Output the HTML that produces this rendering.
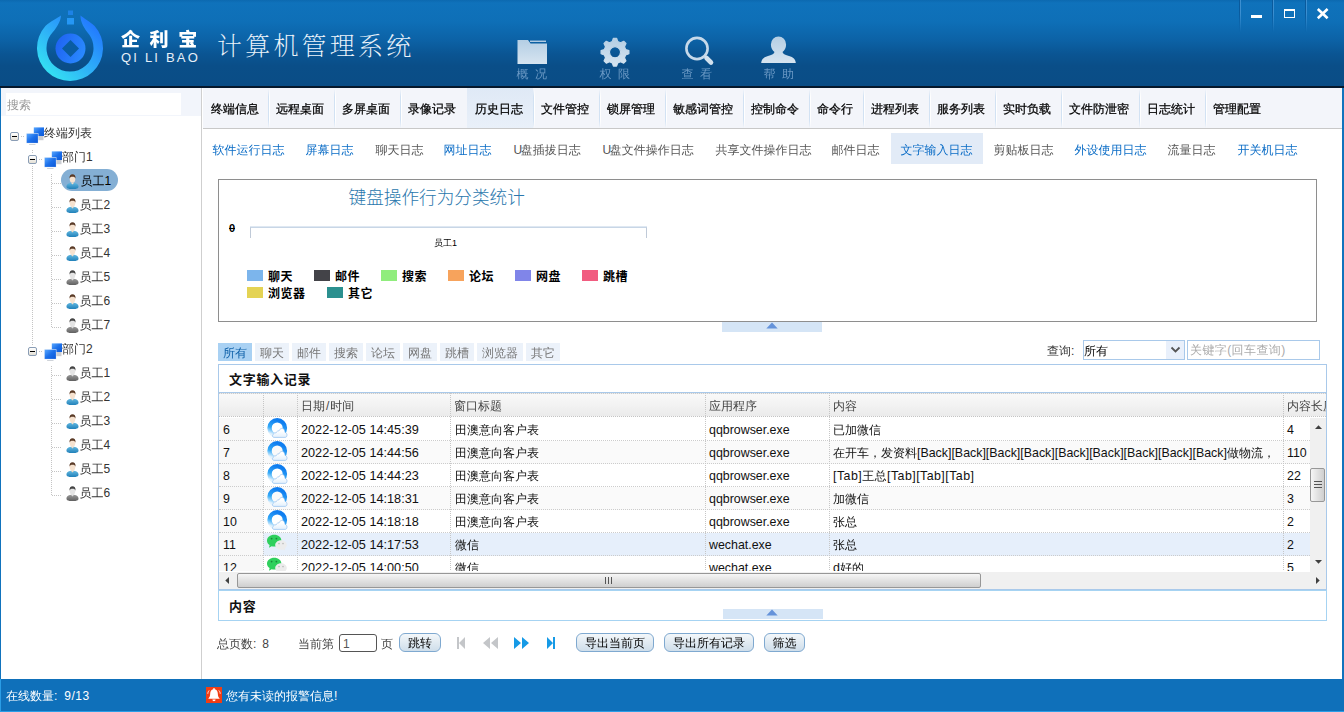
<!DOCTYPE html>
<html lang="zh-CN">
<head>
<meta charset="utf-8">
<title>企利宝 计算机管理系统</title>
<style>
*{box-sizing:border-box;margin:0;padding:0}
html,body{width:1344px;height:712px;overflow:hidden;background:#fff}
body{position:relative;font-family:"Liberation Sans","WenQuanYi Zen Hei","Noto Sans CJK SC",sans-serif;font-size:12px;color:#222}
.abs{position:absolute}
#hdr{position:absolute;left:0;top:0;width:1344px;height:86px;background:linear-gradient(#0c69b0 0,#0f72bb 3px,#0e6fb7 22px,#0c62a6 40px,#0a5593 54px,#0a4e88 66px,#0a4d86 86px)}
#hline{position:absolute;left:0;top:86px;width:1344px;height:2px;background:#06182c}
#lborder{position:absolute;left:0;top:88px;width:1px;height:591px;background:#1173bd}
#rborder{position:absolute;left:1342px;top:88px;width:2px;height:591px;background:#1173bd}
#status{position:absolute;left:0;top:679px;width:1344px;height:33px;background:#0f70ba;color:#fff;font-size:12px}
.t{position:absolute;white-space:nowrap;line-height:1}
/* header */
.brand{color:#fff;font-weight:bold;font-family:"Liberation Sans","Noto Sans CJK SC",sans-serif}
.title{color:#eef4fb;font-family:"Liberation Serif","Noto Serif CJK SC",serif;font-weight:300}
.nav{color:#6a98c4;font-size:12px;letter-spacing:6.5px}
/* left */
#left{position:absolute;left:1px;top:88px;width:200px;height:591px;background:#fff}
#lsep{position:absolute;left:201px;top:88px;width:1px;height:591px;background:#cfcfcf}
#searchbg{position:absolute;left:1px;top:88px;width:200px;height:28px;background:#f2f5fb}
#searchin{position:absolute;left:6px;top:93px;width:175px;height:22px;background:#fff;color:#9a9a9a;font-size:12px;line-height:25px;padding-left:1px}
.tree{font-size:12px;color:#333}
.exp{position:absolute;width:9px;height:9px;border:1px solid #8a9db5;border-radius:2px;background:linear-gradient(#fff,#e4e0d6)}
.exp:after{content:"";position:absolute;left:1px;top:3px;width:5px;height:1px;background:#000}
.vdot{position:absolute;width:1px;background-image:linear-gradient(#c4c4c4 50%,transparent 50%);background-size:1px 2px}
.hdot{position:absolute;height:1px;background-image:linear-gradient(90deg,#c4c4c4 50%,transparent 50%);background-size:2px 1px}
.ttab{font-size:12px;color:#000;-webkit-text-stroke:0.25px #000}
.cell{font-size:12.4px;color:#111}
.cell .c{font-size:12px}
.vdot2{position:absolute;width:1px;background-image:linear-gradient(#c6c6c6 50%,transparent 50%);background-size:1px 2px}
.btn{border:1px solid #7fa9d0;border-radius:6px;background:linear-gradient(#f3f7fa,#cfdeea);font-size:12px;color:#000;text-align:center;line-height:18px;white-space:nowrap}
</style>
</head>
<body>
<div id="hdr"></div>
<div id="hline"></div>
<div id="lborder"></div>
<div id="rborder"></div>
<div id="left"></div>
<div id="lsep"></div>
<div id="searchbg"></div>
<div id="searchin">搜索</div>
<!-- logo -->
<svg class="abs" style="left:30px;top:5px" width="80" height="80" viewBox="30 5 80 80">
<defs>
<linearGradient id="lg1" x1="0.15" y1="0.95" x2="0.9" y2="0.15"><stop offset="0" stop-color="#35e6f2"/><stop offset="0.45" stop-color="#2fb4f7"/><stop offset="1" stop-color="#2278ff"/></linearGradient>
<linearGradient id="lg2" x1="0" y1="0.3" x2="1" y2="0.7"><stop offset="0" stop-color="#1f63f2"/><stop offset="1" stop-color="#2a8bff"/></linearGradient>
</defs>
<path fill="url(#lg1)" d="M61 15.5 C57.5 18 50.5 21.5 45.4 26 A33 33 0 1 0 94.6 26 C89.5 21.5 83.5 18 80.5 15.5 C80.3 22 84 28.5 89.5 35 A23.5 23.5 0 1 1 50.5 35 C56 28.5 60.7 22 61 15.5Z"/>
<circle cx="70.5" cy="48.5" r="15" fill="url(#lg2)"/>
<path fill="#0a5da3" d="M70.5 40 L79 48.5 L70.5 57 L62 48.5Z"/>
<rect x="68" y="10.5" width="5" height="4.5" fill="#1d82e6"/>
<rect x="67" y="18" width="7" height="6.5" fill="#2597f5"/>
</svg>
<span class="t brand" style="left:121px;top:30.5px;font-size:18px;letter-spacing:9px;font-weight:900;transform:scaleX(1.06);transform-origin:0 0">企利宝</span>
<span class="t brand" style="left:121px;top:51px;font-size:13px;font-weight:normal;letter-spacing:2.2px;color:#e6eff8">QI LI BAO</span>
<span class="t title" style="left:217px;top:33.5px;font-size:25px;letter-spacing:3.2px;font-weight:200">计算机管理系统</span>
<!-- nav icons -->
<svg class="abs" style="left:510px;top:30px" width="300" height="40" viewBox="510 30 300 40">
<defs>
<linearGradient id="ng" x1="0" y1="0" x2="0" y2="1"><stop offset="0" stop-color="#b4cee4"/><stop offset="1" stop-color="#d6e4f0"/></linearGradient>
</defs>
<!-- folder -->
<path fill="url(#ng)" d="M517.5 40 h10.5 l2.5 3.5 h16.5 v20.5 h-29.5z"/>
<rect x="530" y="40.6" width="16" height="1.3" fill="#c3d8ea"/>
<!-- gear -->
<g transform="translate(615 52.2)" fill="url(#ng)"><path fill-rule="evenodd" stroke="url(#ng)" stroke-width="1.2" stroke-linejoin="round" d="M-2.75 -10.65 L-1.58 -13.91 L1.58 -13.91 L2.75 -10.65 L5.58 -9.48 L8.72 -10.96 L10.96 -8.72 L9.48 -5.58 L10.65 -2.75 L13.91 -1.58 L13.91 1.58 L10.65 2.75 L9.48 5.58 L10.96 8.72 L8.72 10.96 L5.58 9.48 L2.75 10.65 L1.58 13.91 L-1.58 13.91 L-2.75 10.65 L-5.58 9.48 L-8.72 10.96 L-10.96 8.72 L-9.48 5.58 L-10.65 2.75 L-13.91 1.58 L-13.91 -1.58 L-10.65 -2.75 L-9.48 -5.58 L-10.96 -8.72 L-8.72 -10.96 L-5.58 -9.48Z M0 -5.6 a5.6 5.6 0 1 0 0.01 0z"/></g>
<!-- magnifier -->
<circle cx="697" cy="48.5" r="10.6" fill="none" stroke="#c6d9ea" stroke-width="2.6"/>
<path d="M706.5 58 L711 62.5" stroke="#d2e1ee" stroke-width="4.6" stroke-linecap="round"/>
<!-- person -->
<path fill="url(#ng)" d="M778.5 36.5 a7.6 8 0 0 1 7.6 8 c0 3.6 -1.6 6 -3.6 7.4 c0.6 2.2 3.2 3 6.5 4 c4.2 1.2 6.6 3.2 6.8 7.1 h-34.6 c0.2 -3.9 2.6 -5.9 6.8 -7.1 c3.3 -1 5.9 -1.8 6.5 -4 c-2 -1.4 -3.6 -3.8 -3.6 -7.4 a7.6 8 0 0 1 7.6 -8z"/>
</svg>
<span class="t nav" style="left:516.5px;top:68px">概况</span>
<span class="t nav" style="left:599.5px;top:68px">权限</span>
<span class="t nav" style="left:681.5px;top:68px">查看</span>
<span class="t nav" style="left:763.5px;top:68px">帮助</span>
<!-- window buttons -->
<div class="abs" style="left:1239px;top:0;width:2px;height:32px;background:linear-gradient(90deg,#0a5a9c 50%,#3c8fd0 50%);-webkit-mask-image:linear-gradient(#000 40%,transparent);mask-image:linear-gradient(#000 40%,transparent)"></div>
<div class="abs" style="left:1272px;top:0;width:2px;height:32px;background:linear-gradient(90deg,#0a5a9c 50%,#3c8fd0 50%);-webkit-mask-image:linear-gradient(#000 40%,transparent);mask-image:linear-gradient(#000 40%,transparent)"></div>
<div class="abs" style="left:1305px;top:0;width:2px;height:32px;background:linear-gradient(90deg,#0a5a9c 50%,#3c8fd0 50%);-webkit-mask-image:linear-gradient(#000 40%,transparent);mask-image:linear-gradient(#000 40%,transparent)"></div>
<div class="abs" style="left:1251px;top:15px;width:11px;height:3px;background:#fff"></div>
<div class="abs" style="left:1284px;top:9px;width:11px;height:9px;border:1px solid #fff;border-top-width:2px"></div>
<svg class="abs" style="left:1316px;top:8px" width="14" height="12" viewBox="0 0 14 12"><path d="M1.8 1 L11.6 10.2 M11.6 1 L1.8 10.2" stroke="#fff" stroke-width="2.6" fill="none"/></svg>

<svg width="0" height="0" style="position:absolute"><defs>
<linearGradient id="mon" x1="0" y1="0" x2="1" y2="1"><stop offset="0" stop-color="#5aa8ff"/><stop offset="0.5" stop-color="#1c70ea"/><stop offset="1" stop-color="#0c58d8"/></linearGradient>
<linearGradient id="bodyb" x1="0" y1="0" x2="0" y2="1"><stop offset="0" stop-color="#63b8e0"/><stop offset="1" stop-color="#1f7fb8"/></linearGradient>
<linearGradient id="bodyg" x1="0" y1="0" x2="0" y2="1"><stop offset="0" stop-color="#9a9a9a"/><stop offset="1" stop-color="#5e5e5e"/></linearGradient>
<symbol id="icoMon" viewBox="0 0 18 18">
<rect x="11" y="9" width="6.5" height="4.2" fill="#c9ccd2"/>
<rect x="7.8" y="0.4" width="10.2" height="8.6" fill="url(#mon)"/>
<rect x="3" y="16.9" width="6.6" height="1" rx="0.5" fill="#cfd3d9"/>
<rect x="0.2" y="6.2" width="12.2" height="10.2" fill="#e9eef5"/>
<rect x="0.7" y="6.7" width="11.2" height="9.2" fill="url(#mon)"/>
</symbol>
<symbol id="icoOn" viewBox="0 0 13 16">
<path d="M0.3 13.2 c0 -3 2.4 -4.2 6.2 -4.2 s6.2 1.2 6.2 4.2 c0 1.8 -2.6 2.4 -6.2 2.4 s-6.2 -0.6 -6.2 -2.4z" fill="url(#bodyb)"/>
<path d="M4.6 8.6 l1.9 2.2 l1.9 -2.2z" fill="#f3dcc6"/>
<ellipse cx="6.5" cy="5.2" rx="2.9" ry="3.6" fill="#f6e2cf"/>
<path d="M3.4 4.8 c-0.3 -3 1.2 -4.5 3.1 -4.5 s3.5 1.5 3.1 4.5 c-0.5 -1.5 -1.3 -2 -3.1 -2 s-2.6 0.5 -3.1 2z" fill="#5a3a26"/>
</symbol>
<symbol id="icoOff" viewBox="0 0 13 16">
<path d="M0.3 13.2 c0 -3 2.4 -4.2 6.2 -4.2 s6.2 1.2 6.2 4.2 c0 1.8 -2.6 2.4 -6.2 2.4 s-6.2 -0.6 -6.2 -2.4z" fill="url(#bodyg)"/>
<path d="M4.6 8.6 l1.9 2.2 l1.9 -2.2z" fill="#dcdcdc"/>
<ellipse cx="6.5" cy="5.2" rx="2.9" ry="3.6" fill="#e4e4e4"/>
<path d="M3.4 4.8 c-0.3 -3 1.2 -4.5 3.1 -4.5 s3.5 1.5 3.1 4.5 c-0.5 -1.5 -1.3 -2 -3.1 -2 s-2.6 0.5 -3.1 2z" fill="#444"/>
</symbol>
</defs></svg>
<div class="exp" style="left:10px;top:132px"></div>
<div class="hdot" style="left:21px;top:136px;width:4px"></div>
<svg class="abs" style="left:26px;top:127px" width="18" height="18"><use href="#icoMon"/></svg>
<span class="t tree" style="left:44px;top:127px;">终端列表</span>
<div class="exp" style="left:28px;top:155px"></div>
<div class="hdot" style="left:39px;top:159px;width:4px"></div>
<svg class="abs" style="left:44px;top:151px" width="18" height="18"><use href="#icoMon"/></svg>
<span class="t tree" style="left:62px;top:151px;">部门1</span>
<div class="hdot" style="left:52px;top:183px;width:9px"></div>
<div class="abs" style="left:61px;top:169px;width:57px;height:22px;border-radius:11px;background:#84afd4"></div>
<svg class="abs" style="left:65.5px;top:173.7px" width="13" height="15.6"><use href="#icoOn"/></svg>
<span class="t tree" style="left:80.5px;top:175px;color:#000">员工1</span>
<div class="hdot" style="left:52px;top:207px;width:9px"></div>
<svg class="abs" style="left:65.5px;top:197.7px" width="13" height="15.6"><use href="#icoOn"/></svg>
<span class="t tree" style="left:79.5px;top:199px;">员工2</span>
<div class="hdot" style="left:52px;top:231px;width:9px"></div>
<svg class="abs" style="left:65.5px;top:221.7px" width="13" height="15.6"><use href="#icoOn"/></svg>
<span class="t tree" style="left:79.5px;top:223px;">员工3</span>
<div class="hdot" style="left:52px;top:255px;width:9px"></div>
<svg class="abs" style="left:65.5px;top:245.7px" width="13" height="15.6"><use href="#icoOn"/></svg>
<span class="t tree" style="left:79.5px;top:247px;">员工4</span>
<div class="hdot" style="left:52px;top:279px;width:9px"></div>
<svg class="abs" style="left:65.5px;top:269.7px" width="13" height="15.6"><use href="#icoOff"/></svg>
<span class="t tree" style="left:79.5px;top:271px;">员工5</span>
<div class="hdot" style="left:52px;top:303px;width:9px"></div>
<svg class="abs" style="left:65.5px;top:293.7px" width="13" height="15.6"><use href="#icoOn"/></svg>
<span class="t tree" style="left:79.5px;top:295px;">员工6</span>
<div class="hdot" style="left:52px;top:327px;width:9px"></div>
<svg class="abs" style="left:65.5px;top:317.7px" width="13" height="15.6"><use href="#icoOff"/></svg>
<span class="t tree" style="left:79.5px;top:319px;">员工7</span>
<div class="exp" style="left:28px;top:347px"></div>
<div class="hdot" style="left:39px;top:351px;width:4px"></div>
<svg class="abs" style="left:44px;top:343px" width="18" height="18"><use href="#icoMon"/></svg>
<span class="t tree" style="left:62px;top:343px;">部门2</span>
<div class="hdot" style="left:52px;top:375px;width:9px"></div>
<svg class="abs" style="left:65.5px;top:365.7px" width="13" height="15.6"><use href="#icoOff"/></svg>
<span class="t tree" style="left:79.5px;top:367px;">员工1</span>
<div class="hdot" style="left:52px;top:399px;width:9px"></div>
<svg class="abs" style="left:65.5px;top:389.7px" width="13" height="15.6"><use href="#icoOn"/></svg>
<span class="t tree" style="left:79.5px;top:391px;">员工2</span>
<div class="hdot" style="left:52px;top:423px;width:9px"></div>
<svg class="abs" style="left:65.5px;top:413.7px" width="13" height="15.6"><use href="#icoOn"/></svg>
<span class="t tree" style="left:79.5px;top:415px;">员工3</span>
<div class="hdot" style="left:52px;top:447px;width:9px"></div>
<svg class="abs" style="left:65.5px;top:437.7px" width="13" height="15.6"><use href="#icoOn"/></svg>
<span class="t tree" style="left:79.5px;top:439px;">员工4</span>
<div class="hdot" style="left:52px;top:471px;width:9px"></div>
<svg class="abs" style="left:65.5px;top:461.7px" width="13" height="15.6"><use href="#icoOn"/></svg>
<span class="t tree" style="left:79.5px;top:463px;">员工5</span>
<div class="hdot" style="left:52px;top:495px;width:9px"></div>
<svg class="abs" style="left:65.5px;top:485.7px" width="13" height="15.6"><use href="#icoOff"/></svg>
<span class="t tree" style="left:79.5px;top:487px;">员工6</span>
<div class="vdot" style="left:32px;top:150px;height:4px"></div>
<div class="vdot" style="left:32px;top:166px;height:180px"></div>
<div class="vdot" style="left:51px;top:174px;height:154px"></div>
<div class="vdot" style="left:51px;top:366px;height:130px"></div>

<div class="abs" style="left:203px;top:88px;width:1139px;height:41px;background:#f3f5fa;border-bottom:1px solid #c8c8c8"></div>
<span class="t ttab" style="left:211px;top:102.5px">终端信息</span>
<div class="abs" style="left:268px;top:89px;width:1px;height:39px;background:linear-gradient(transparent,#d2e2f3 20%,#d2e2f3 80%,transparent)"></div><div class="abs" style="left:269px;top:89px;width:1px;height:39px;background:linear-gradient(transparent,#fff 20%,#fff 80%,transparent)"></div>
<span class="t ttab" style="left:276px;top:102.5px">远程桌面</span>
<div class="abs" style="left:334px;top:89px;width:1px;height:39px;background:linear-gradient(transparent,#d2e2f3 20%,#d2e2f3 80%,transparent)"></div><div class="abs" style="left:335px;top:89px;width:1px;height:39px;background:linear-gradient(transparent,#fff 20%,#fff 80%,transparent)"></div>
<span class="t ttab" style="left:342px;top:102.5px">多屏桌面</span>
<div class="abs" style="left:400px;top:89px;width:1px;height:39px;background:linear-gradient(transparent,#d2e2f3 20%,#d2e2f3 80%,transparent)"></div><div class="abs" style="left:401px;top:89px;width:1px;height:39px;background:linear-gradient(transparent,#fff 20%,#fff 80%,transparent)"></div>
<span class="t ttab" style="left:408px;top:102.5px">录像记录</span>
<div class="abs" style="left:467px;top:89px;width:1px;height:39px;background:linear-gradient(transparent,#d2e2f3 20%,#d2e2f3 80%,transparent)"></div><div class="abs" style="left:468px;top:89px;width:1px;height:39px;background:linear-gradient(transparent,#fff 20%,#fff 80%,transparent)"></div>
<div class="abs" style="left:467px;top:88px;width:66px;height:40px;background:linear-gradient(#dfe9f6,#e9f0f9)"></div>
<span class="t ttab" style="left:475px;top:102.5px">历史日志</span>
<div class="abs" style="left:533px;top:89px;width:1px;height:39px;background:linear-gradient(transparent,#d2e2f3 20%,#d2e2f3 80%,transparent)"></div><div class="abs" style="left:534px;top:89px;width:1px;height:39px;background:linear-gradient(transparent,#fff 20%,#fff 80%,transparent)"></div>
<span class="t ttab" style="left:541px;top:102.5px">文件管控</span>
<div class="abs" style="left:599px;top:89px;width:1px;height:39px;background:linear-gradient(transparent,#d2e2f3 20%,#d2e2f3 80%,transparent)"></div><div class="abs" style="left:600px;top:89px;width:1px;height:39px;background:linear-gradient(transparent,#fff 20%,#fff 80%,transparent)"></div>
<span class="t ttab" style="left:607px;top:102.5px">锁屏管理</span>
<div class="abs" style="left:665px;top:89px;width:1px;height:39px;background:linear-gradient(transparent,#d2e2f3 20%,#d2e2f3 80%,transparent)"></div><div class="abs" style="left:666px;top:89px;width:1px;height:39px;background:linear-gradient(transparent,#fff 20%,#fff 80%,transparent)"></div>
<span class="t ttab" style="left:673px;top:102.5px">敏感词管控</span>
<div class="abs" style="left:743px;top:89px;width:1px;height:39px;background:linear-gradient(transparent,#d2e2f3 20%,#d2e2f3 80%,transparent)"></div><div class="abs" style="left:744px;top:89px;width:1px;height:39px;background:linear-gradient(transparent,#fff 20%,#fff 80%,transparent)"></div>
<span class="t ttab" style="left:751px;top:102.5px">控制命令</span>
<div class="abs" style="left:809px;top:89px;width:1px;height:39px;background:linear-gradient(transparent,#d2e2f3 20%,#d2e2f3 80%,transparent)"></div><div class="abs" style="left:810px;top:89px;width:1px;height:39px;background:linear-gradient(transparent,#fff 20%,#fff 80%,transparent)"></div>
<span class="t ttab" style="left:817px;top:102.5px">命令行</span>
<div class="abs" style="left:863px;top:89px;width:1px;height:39px;background:linear-gradient(transparent,#d2e2f3 20%,#d2e2f3 80%,transparent)"></div><div class="abs" style="left:864px;top:89px;width:1px;height:39px;background:linear-gradient(transparent,#fff 20%,#fff 80%,transparent)"></div>
<span class="t ttab" style="left:871px;top:102.5px">进程列表</span>
<div class="abs" style="left:929px;top:89px;width:1px;height:39px;background:linear-gradient(transparent,#d2e2f3 20%,#d2e2f3 80%,transparent)"></div><div class="abs" style="left:930px;top:89px;width:1px;height:39px;background:linear-gradient(transparent,#fff 20%,#fff 80%,transparent)"></div>
<span class="t ttab" style="left:937px;top:102.5px">服务列表</span>
<div class="abs" style="left:995px;top:89px;width:1px;height:39px;background:linear-gradient(transparent,#d2e2f3 20%,#d2e2f3 80%,transparent)"></div><div class="abs" style="left:996px;top:89px;width:1px;height:39px;background:linear-gradient(transparent,#fff 20%,#fff 80%,transparent)"></div>
<span class="t ttab" style="left:1003px;top:102.5px">实时负载</span>
<div class="abs" style="left:1061px;top:89px;width:1px;height:39px;background:linear-gradient(transparent,#d2e2f3 20%,#d2e2f3 80%,transparent)"></div><div class="abs" style="left:1062px;top:89px;width:1px;height:39px;background:linear-gradient(transparent,#fff 20%,#fff 80%,transparent)"></div>
<span class="t ttab" style="left:1069px;top:102.5px">文件防泄密</span>
<div class="abs" style="left:1139px;top:89px;width:1px;height:39px;background:linear-gradient(transparent,#d2e2f3 20%,#d2e2f3 80%,transparent)"></div><div class="abs" style="left:1140px;top:89px;width:1px;height:39px;background:linear-gradient(transparent,#fff 20%,#fff 80%,transparent)"></div>
<span class="t ttab" style="left:1147px;top:102.5px">日志统计</span>
<div class="abs" style="left:1205px;top:89px;width:1px;height:39px;background:linear-gradient(transparent,#d2e2f3 20%,#d2e2f3 80%,transparent)"></div><div class="abs" style="left:1206px;top:89px;width:1px;height:39px;background:linear-gradient(transparent,#fff 20%,#fff 80%,transparent)"></div>
<span class="t ttab" style="left:1213px;top:102.5px">管理配置</span>
<div class="abs" style="left:891px;top:133px;width:92px;height:31px;background:#e2ebf7"></div>
<span class="t" style="left:212.5px;top:144px;font-size:12px;color:#0a6cc6">软件运行日志</span>
<span class="t" style="left:305.5px;top:144px;font-size:12px;color:#0a6cc6">屏幕日志</span>
<span class="t" style="left:375.5px;top:144px;font-size:12px;color:#555">聊天日志</span>
<span class="t" style="left:443.5px;top:144px;font-size:12px;color:#0a6cc6">网址日志</span>
<span class="t" style="left:513.5px;top:144px;font-size:12px;color:#555"><span style="letter-spacing:-1.5px">U</span>盘插拔日志</span>
<span class="t" style="left:602.5px;top:144px;font-size:12px;color:#555"><span style="letter-spacing:-1.5px">U</span>盘文件操作日志</span>
<span class="t" style="left:715.5px;top:144px;font-size:12px;color:#555">共享文件操作日志</span>
<span class="t" style="left:831.5px;top:144px;font-size:12px;color:#555">邮件日志</span>
<span class="t" style="left:900.5px;top:144px;font-size:12px;color:#0a6cc6">文字输入日志</span>
<span class="t" style="left:993.5px;top:144px;font-size:12px;color:#555">剪贴板日志</span>
<span class="t" style="left:1074.5px;top:144px;font-size:12px;color:#0a6cc6">外设使用日志</span>
<span class="t" style="left:1167.5px;top:144px;font-size:12px;color:#555">流量日志</span>
<span class="t" style="left:1237.5px;top:144px;font-size:12px;color:#0a6cc6">开关机日志</span>

<svg width="0" height="0" style="position:absolute"><defs>
<linearGradient id="qqg" x1="0.4" y1="1" x2="0.75" y2="0.1"><stop offset="0" stop-color="#e4f3fd"/><stop offset="0.4" stop-color="#35aaf7"/><stop offset="1" stop-color="#0f7df0"/></linearGradient>
<linearGradient id="qqc" x1="0" y1="0" x2="0" y2="1"><stop offset="0.3" stop-color="#ffffff"/><stop offset="1" stop-color="#e2f0fc"/></linearGradient>
<symbol id="icoQQ" viewBox="0 0 22 22">
<circle cx="11.2" cy="11" r="7.7" fill="none" stroke="url(#qqg)" stroke-width="4.4"/>
<path d="M8 20.4 C6.4 20.4 5.9 18.5 7.2 17.4 C7.6 16 9 15.6 9.9 16 C10.4 14.4 12 13.6 13 14 C13.6 11.5 16.7 10.3 18.1 12.6 C18.8 13.6 19 14.6 19 15.4 C21.5 15.6 21.9 20.4 19 20.4Z" fill="url(#qqc)" stroke="#7fb4ea" stroke-width="0.55"/>
</symbol>
<symbol id="icoWX" viewBox="0 0 22 20">
<path d="M8.2 2.8 c4 0 7.2 2.6 7.2 5.9 s-3.2 5.9 -7.2 5.9 c-0.9 0 -1.8 -0.1 -2.6 -0.4 l-2.6 1.5 l0.6 -2.6 c-1.6 -1.1 -2.6 -2.7 -2.6 -4.4 c0 -3.3 3.2 -5.9 7.2 -5.9z" fill="#2fd05d"/>
<circle cx="5.6" cy="6.6" r="0.9" fill="#1a8a3a"/><circle cx="10.4" cy="6.6" r="0.9" fill="#1a8a3a"/>
<path d="M15 8.2 c3.2 0 5.8 2.1 5.8 4.8 c0 1.4 -0.8 2.7 -2 3.6 l0.4 1.9 l-2 -1.1 c-0.7 0.2 -1.4 0.3 -2.2 0.3 c-3.2 0 -5.8 -2.1 -5.8 -4.7 s2.6 -4.8 5.8 -4.8z" fill="#ececec"/>
<circle cx="13" cy="11.6" r="0.8" fill="#b9b9b9"/><circle cx="17" cy="11.6" r="0.8" fill="#b9b9b9"/>
</symbol>
</defs></svg>
<div class="abs" style="left:218px;top:179px;width:1099px;height:143px;border:1px solid #8e8e8e;background:#fff"></div>
<span class="t" style="left:348.5px;top:189.5px;font-size:17.65px;color:#2a77ad;font-family:'Liberation Sans','Noto Sans CJK SC',sans-serif;font-weight:300">键盘操作行为分类统计</span>
<span class="t" style="left:229px;top:222.5px;font-size:11px;font-weight:bold;color:#000">0</span><div class="abs" style="left:229px;top:228px;width:6px;height:1px;background:#000"></div>
<div class="abs" style="left:250px;top:227px;width:397px;height:11px;border:1px solid #c0cad8;border-bottom:none;border-top-color:#c8d6e6"></div><div class="abs" style="left:250px;top:226px;width:397px;height:1px;background:#dfe8f2"></div>
<span class="t" style="left:434px;top:239px;font-size:9px;color:#000">员工1</span>
<div class="abs" style="left:247px;top:270px;width:16px;height:11px;background:#7cb5ec"></div><span class="t" style="left:268px;top:270.5px;font-size:12px;letter-spacing:0.5px;font-weight:bold;color:#000;font-family:'Liberation Sans','Noto Sans CJK SC',sans-serif">聊天</span>
<div class="abs" style="left:314px;top:270px;width:16px;height:11px;background:#434348"></div><span class="t" style="left:335px;top:270.5px;font-size:12px;letter-spacing:0.5px;font-weight:bold;color:#000;font-family:'Liberation Sans','Noto Sans CJK SC',sans-serif">邮件</span>
<div class="abs" style="left:381px;top:270px;width:16px;height:11px;background:#90ed7d"></div><span class="t" style="left:402px;top:270.5px;font-size:12px;letter-spacing:0.5px;font-weight:bold;color:#000;font-family:'Liberation Sans','Noto Sans CJK SC',sans-serif">搜索</span>
<div class="abs" style="left:448px;top:270px;width:16px;height:11px;background:#f7a35c"></div><span class="t" style="left:469px;top:270.5px;font-size:12px;letter-spacing:0.5px;font-weight:bold;color:#000;font-family:'Liberation Sans','Noto Sans CJK SC',sans-serif">论坛</span>
<div class="abs" style="left:515px;top:270px;width:16px;height:11px;background:#8085e9"></div><span class="t" style="left:536px;top:270.5px;font-size:12px;letter-spacing:0.5px;font-weight:bold;color:#000;font-family:'Liberation Sans','Noto Sans CJK SC',sans-serif">网盘</span>
<div class="abs" style="left:582px;top:270px;width:16px;height:11px;background:#f15c80"></div><span class="t" style="left:603px;top:270.5px;font-size:12px;letter-spacing:0.5px;font-weight:bold;color:#000;font-family:'Liberation Sans','Noto Sans CJK SC',sans-serif">跳槽</span>
<div class="abs" style="left:247px;top:287px;width:16px;height:11px;background:#e4d354"></div><span class="t" style="left:268px;top:287.5px;font-size:12px;letter-spacing:0.5px;font-weight:bold;color:#000;font-family:'Liberation Sans','Noto Sans CJK SC',sans-serif">浏览器</span>
<div class="abs" style="left:327px;top:287px;width:16px;height:11px;background:#2b908f"></div><span class="t" style="left:348px;top:287.5px;font-size:12px;letter-spacing:0.5px;font-weight:bold;color:#000;font-family:'Liberation Sans','Noto Sans CJK SC',sans-serif">其它</span>
<div class="abs" style="left:722px;top:322px;width:100px;height:10px;background:#d5e5f6"></div><svg class="abs" style="left:765.6px;top:322.4px" width="12" height="7"><path d="M0.3 6.6 L6 0.4 L11.7 6.6Z" fill="#6593da"/></svg>
<div class="abs" style="left:218px;top:343px;width:34px;height:18px;background:#a9d1f3"></div><span class="t" style="left:223px;top:347px;font-size:12px;color:#0c5fa8">所有</span>
<div class="abs" style="left:255px;top:343px;width:34px;height:18px;background:#ecf2fa"></div><span class="t" style="left:260px;top:347px;font-size:12px;color:#777">聊天</span>
<div class="abs" style="left:292px;top:343px;width:34px;height:18px;background:#ecf2fa"></div><span class="t" style="left:297px;top:347px;font-size:12px;color:#777">邮件</span>
<div class="abs" style="left:329px;top:343px;width:34px;height:18px;background:#ecf2fa"></div><span class="t" style="left:334px;top:347px;font-size:12px;color:#777">搜索</span>
<div class="abs" style="left:366px;top:343px;width:34px;height:18px;background:#ecf2fa"></div><span class="t" style="left:371px;top:347px;font-size:12px;color:#777">论坛</span>
<div class="abs" style="left:403px;top:343px;width:34px;height:18px;background:#ecf2fa"></div><span class="t" style="left:408px;top:347px;font-size:12px;color:#777">网盘</span>
<div class="abs" style="left:440px;top:343px;width:34px;height:18px;background:#ecf2fa"></div><span class="t" style="left:445px;top:347px;font-size:12px;color:#777">跳槽</span>
<div class="abs" style="left:477px;top:343px;width:46px;height:18px;background:#ecf2fa"></div><span class="t" style="left:482px;top:347px;font-size:12px;color:#777">浏览器</span>
<div class="abs" style="left:526px;top:343px;width:34px;height:18px;background:#ecf2fa"></div><span class="t" style="left:531px;top:347px;font-size:12px;color:#777">其它</span>
<span class="t" style="left:1047px;top:345px;font-size:12px;color:#333">查询:</span>
<div class="abs" style="left:1083px;top:340px;width:102px;height:20px;border:1px solid #a9c9ea;background:#fff"></div><div class="abs" style="left:1166px;top:341px;width:18px;height:18px;background:#e9f0fb"></div><span class="t" style="left:1084px;top:345px;font-size:12px;color:#000">所有</span>
<svg class="abs" style="left:1170px;top:346px" width="12" height="8"><path d="M1.5 1.5 L5.5 5.5 L9.5 1.5" stroke="#555" stroke-width="1.8" fill="none"/></svg>
<div class="abs" style="left:1187px;top:340px;width:133px;height:20px;border:1px solid #a9c9ea;background:#fff"></div><span class="t" style="left:1190px;top:344px;font-size:12px;letter-spacing:0.4px;color:#aaa">关键字(回车查询)</span>
<div class="abs" style="left:218px;top:364px;width:1109px;height:226px;border:1px solid #a9c9ea;background:#fff"></div>
<span class="t" style="left:229px;top:373px;font-size:13px;font-weight:bold;color:#111;letter-spacing:0.7px;font-family:'Liberation Sans','Noto Sans CJK SC',sans-serif">文字输入记录</span>
<div class="abs" style="left:219px;top:392px;width:1107px;height:1px;background:#a9c9ea"></div>
<div class="abs" style="left:219px;top:393px;width:1107px;height:24px;background:linear-gradient(#f9f9f9,#ebebeb);border-bottom:1px dotted #c4c4c4;border-top:1px dotted #ccc"></div>
<div class="abs" style="left:219px;top:393px;width:1107px;height:178px;overflow:hidden">
<span class="t" style="left:82px;top:7px;font-size:12px;color:#444">日期<span style="margin:0 1px">/</span>时间</span>
<span class="t" style="left:235px;top:7px;font-size:12px;color:#444">窗口标题</span>
<span class="t" style="left:490px;top:7px;font-size:12px;color:#444">应用程序</span>
<span class="t" style="left:614px;top:7px;font-size:12px;color:#444">内容</span>
<span class="t" style="left:1068px;top:7px;font-size:12px;color:#444">内容长度</span>
<div class="abs" style="left:0;top:25px;width:1091px;height:23px;background:#fff;border-bottom:1px dotted #ccc"></div>
<span class="t cell" style="left:4px;top:31px">6</span>
<span class="t cell" style="left:82px;top:31px;font-size:12.7px">2022-12-05 14:45:39</span>
<span class="t cell" style="left:236px;top:31px"><span class="c">田澳意向客户表</span></span>
<span class="t cell" style="left:490px;top:31px">qqbrowser.exe</span>
<span class="t cell" style="left:614px;top:31px"><span class="c">已加微信</span></span>
<span class="t cell" style="left:1068px;top:31px">4</span>
<svg class="abs" style="left:47px;top:24px" width="22" height="22"><use href="#icoQQ"/></svg>
<div class="abs" style="left:0;top:48px;width:1091px;height:23px;background:#fafafa;border-bottom:1px dotted #ccc"></div>
<span class="t cell" style="left:4px;top:54px">7</span>
<span class="t cell" style="left:82px;top:54px;font-size:12.7px">2022-12-05 14:44:56</span>
<span class="t cell" style="left:236px;top:54px"><span class="c">田澳意向客户表</span></span>
<span class="t cell" style="left:490px;top:54px">qqbrowser.exe</span>
<span class="t cell" style="left:614px;top:54px"><span class="c">在开车，发资料</span>[Back][Back][Back][Back][Back][Back][Back][Back][Back]<span class="c">做物流，</span></span>
<span class="t cell" style="left:1068px;top:54px">110</span>
<svg class="abs" style="left:47px;top:47px" width="22" height="22"><use href="#icoQQ"/></svg>
<div class="abs" style="left:0;top:71px;width:1091px;height:23px;background:#fff;border-bottom:1px dotted #ccc"></div>
<span class="t cell" style="left:4px;top:77px">8</span>
<span class="t cell" style="left:82px;top:77px;font-size:12.7px">2022-12-05 14:44:23</span>
<span class="t cell" style="left:236px;top:77px"><span class="c">田澳意向客户表</span></span>
<span class="t cell" style="left:490px;top:77px">qqbrowser.exe</span>
<span class="t cell" style="left:614px;top:77px;letter-spacing:0.45px">[Tab]<span class="c">王总</span>[Tab][Tab][Tab]</span>
<span class="t cell" style="left:1068px;top:77px">22</span>
<svg class="abs" style="left:47px;top:70px" width="22" height="22"><use href="#icoQQ"/></svg>
<div class="abs" style="left:0;top:94px;width:1091px;height:23px;background:#fafafa;border-bottom:1px dotted #ccc"></div>
<span class="t cell" style="left:4px;top:100px">9</span>
<span class="t cell" style="left:82px;top:100px;font-size:12.7px">2022-12-05 14:18:31</span>
<span class="t cell" style="left:236px;top:100px"><span class="c">田澳意向客户表</span></span>
<span class="t cell" style="left:490px;top:100px">qqbrowser.exe</span>
<span class="t cell" style="left:614px;top:100px"><span class="c">加微信</span></span>
<span class="t cell" style="left:1068px;top:100px">3</span>
<svg class="abs" style="left:47px;top:93px" width="22" height="22"><use href="#icoQQ"/></svg>
<div class="abs" style="left:0;top:117px;width:1091px;height:23px;background:#fff;border-bottom:1px dotted #ccc"></div>
<span class="t cell" style="left:4px;top:123px">10</span>
<span class="t cell" style="left:82px;top:123px;font-size:12.7px">2022-12-05 14:18:18</span>
<span class="t cell" style="left:236px;top:123px"><span class="c">田澳意向客户表</span></span>
<span class="t cell" style="left:490px;top:123px">qqbrowser.exe</span>
<span class="t cell" style="left:614px;top:123px"><span class="c">张总</span></span>
<span class="t cell" style="left:1068px;top:123px">2</span>
<svg class="abs" style="left:47px;top:116px" width="22" height="22"><use href="#icoQQ"/></svg>
<div class="abs" style="left:0;top:140px;width:1091px;height:23px;background:#e6effb;border-bottom:1px dotted #ccc"></div>
<span class="t cell" style="left:4px;top:146px">11</span>
<span class="t cell" style="left:82px;top:146px;font-size:12.7px">2022-12-05 14:17:53</span>
<span class="t cell" style="left:236px;top:146px"><span class="c">微信</span></span>
<span class="t cell" style="left:490px;top:146px">wechat.exe</span>
<span class="t cell" style="left:614px;top:146px"><span class="c">张总</span></span>
<span class="t cell" style="left:1068px;top:146px">2</span>
<svg class="abs" style="left:47px;top:139.3px" width="22" height="20"><use href="#icoWX"/></svg>
<div class="abs" style="left:0;top:163px;width:1091px;height:23px;background:#fff;border-bottom:1px dotted #ccc"></div>
<span class="t cell" style="left:4px;top:169px">12</span>
<span class="t cell" style="left:82px;top:169px;font-size:12.7px">2022-12-05 14:00:50</span>
<span class="t cell" style="left:236px;top:169px"><span class="c">微信</span></span>
<span class="t cell" style="left:490px;top:169px">wechat.exe</span>
<span class="t cell" style="left:614px;top:169px">d<span class="c">好的</span></span>
<span class="t cell" style="left:1068px;top:169px">5</span>
<svg class="abs" style="left:47px;top:162.3px" width="22" height="20"><use href="#icoWX"/></svg>
<div class="abs" style="left:0;top:25px;width:44px;height:160px;background:#f8f8f8"></div>
<div class="abs" style="left:0;top:47px;width:44px;height:1px;border-bottom:1px dotted #ccc"></div><span class="t cell" style="left:4px;top:31px">6</span>
<div class="abs" style="left:0;top:70px;width:44px;height:1px;border-bottom:1px dotted #ccc"></div><span class="t cell" style="left:4px;top:54px">7</span>
<div class="abs" style="left:0;top:93px;width:44px;height:1px;border-bottom:1px dotted #ccc"></div><span class="t cell" style="left:4px;top:77px">8</span>
<div class="abs" style="left:0;top:116px;width:44px;height:1px;border-bottom:1px dotted #ccc"></div><span class="t cell" style="left:4px;top:100px">9</span>
<div class="abs" style="left:0;top:139px;width:44px;height:1px;border-bottom:1px dotted #ccc"></div><span class="t cell" style="left:4px;top:123px">10</span>
<div class="abs" style="left:0;top:162px;width:44px;height:1px;border-bottom:1px dotted #ccc"></div><span class="t cell" style="left:4px;top:146px">11</span>
<div class="abs" style="left:0;top:185px;width:44px;height:1px;border-bottom:1px dotted #ccc"></div><span class="t cell" style="left:4px;top:169px">12</span>
<div class="vdot2" style="left:44px;top:0;height:179px"></div>
<div class="vdot2" style="left:78px;top:0;height:179px"></div>
<div class="vdot2" style="left:231px;top:0;height:179px"></div>
<div class="vdot2" style="left:486px;top:0;height:179px"></div>
<div class="vdot2" style="left:610px;top:0;height:179px"></div>
<div class="vdot2" style="left:1064px;top:0;height:179px"></div>
</div>
<div class="abs" style="left:1310px;top:418px;width:16px;height:154px;background:#f0f0f0"></div>
<svg class="abs" style="left:1315px;top:425px" width="7" height="4"><path d="M0 4 L3.5 0.3 L7 4Z" fill="#404040"/></svg>
<svg class="abs" style="left:1315px;top:560px" width="7" height="4"><path d="M0 0 L3.5 3.7 L7 0Z" fill="#404040"/></svg>
<div class="abs" style="left:1310px;top:468px;width:15px;height:34px;border:1px solid #979797;border-radius:2px;background:linear-gradient(90deg,#f6f6f6,#e2e2e2 50%,#cfcfcf)"></div>
<div class="abs" style="left:1314px;top:481px;width:8px;height:1px;background:#555"></div>
<div class="abs" style="left:1314px;top:484px;width:8px;height:1px;background:#555"></div>
<div class="abs" style="left:1314px;top:487px;width:8px;height:1px;background:#555"></div>
<div class="abs" style="left:219px;top:572px;width:1107px;height:17px;background:#f0f0f0"></div>
<svg class="abs" style="left:225px;top:577px" width="4" height="7"><path d="M4 0 L0.3 3.5 L4 7Z" fill="#404040"/></svg>
<svg class="abs" style="left:1316px;top:577px" width="4" height="7"><path d="M0 0 L3.7 3.5 L0 7Z" fill="#404040"/></svg>
<div class="abs" style="left:237px;top:573px;width:744px;height:15px;border:1px solid #979797;border-radius:2px;background:linear-gradient(#f6f6f6,#e2e2e2 50%,#cfcfcf)"></div>
<div class="abs" style="left:605px;top:577px;width:1px;height:7px;background:#555"></div>
<div class="abs" style="left:608px;top:577px;width:1px;height:7px;background:#555"></div>
<div class="abs" style="left:611px;top:577px;width:1px;height:7px;background:#555"></div>
<div class="abs" style="left:218px;top:590px;width:1109px;height:31px;border:1px solid #a6d3f2;background:#fff"></div>
<span class="t" style="left:229px;top:600px;font-size:13px;font-weight:bold;color:#111;letter-spacing:0.7px;font-family:'Liberation Sans','Noto Sans CJK SC',sans-serif">内容</span>
<div class="abs" style="left:723px;top:609px;width:100px;height:10px;background:#d5e5f6"></div><svg class="abs" style="left:766px;top:609px" width="12" height="7"><path d="M0.3 6.6 L6 0.4 L11.7 6.6Z" fill="#6593da"/></svg>
<span class="t" style="left:217px;top:638px;font-size:12px;color:#444">总页数:<span style="margin-left:6px">8</span></span>
<span class="t" style="left:298px;top:638px;font-size:12px;color:#444">当前第</span>
<div class="abs" style="left:339px;top:634px;width:38px;height:18px;border:1px solid #555;border-radius:3px;background:#fff"></div><span class="t" style="left:343px;top:638px;font-size:12px;color:#555">1</span>
<span class="t" style="left:381px;top:638px;font-size:12px;color:#444">页</span>
<div class="abs btn" style="left:399px;top:633px;width:42px;height:19px">跳转</div>
<div class="abs btn" style="left:576px;top:633px;width:78px;height:19px">导出当前页</div>
<div class="abs btn" style="left:664px;top:633px;width:90px;height:19px">导出所有记录</div>
<div class="abs btn" style="left:764px;top:633px;width:41px;height:19px">筛选</div>
<svg class="abs" style="left:455px;top:635px" width="104" height="16" viewBox="455 635 104 16"><path d="M457 637 h2 v12 h-2z M465 637 v12 l-6 -6z" fill="#c4c6c9"/><path d="M490 637 v12 l-7 -6z M498 637 v12 l-7 -6z" fill="#c4c6c9"/><path d="M514 637 v12 l7 -6z M522 637 v12 l7 -6z" fill="#169ae6"/><path d="M547 637 v12 l6 -6z M553 637 h2 v12 h-2z" fill="#169ae6"/></svg>

<div id="status"><div class="abs" style="left:0;top:0;width:1px;height:33px;background:#2a9de6"></div><div class="abs" style="left:0;top:32px;width:1344px;height:1px;background:#2a9de6"></div>
<span class="t" style="left:6px;top:11px">在线数量:<span style="margin-left:7px;letter-spacing:0.5px">9/13</span></span>
<svg class="abs" style="left:206px;top:8px" width="16" height="16" viewBox="0 0 16 16"><rect width="16" height="16" fill="#f23d14"/><path d="M8 2.2 c2.6 0 3.8 2 3.8 4.4 c0 2.6 0.8 4 2 5.2 h-11.6 c1.2 -1.2 2 -2.6 2 -5.2 c0 -2.4 1.2 -4.4 3.8 -4.4z M6.4 12.6 h3.2 a1.6 1.6 0 0 1 -3.2 0z M7.2 1.2 h1.6 v1.4 h-1.6z" fill="#fff"/><path d="M3.2 3.4 c-1 1 -1.4 2.2 -1.4 3.4 M12.8 3.4 c1 1 1.4 2.2 1.4 3.4" stroke="#fff" stroke-width="0.8" fill="none"/></svg>
<span class="t" style="left:226px;top:11px">您有未读的报警信息!</span>
</div>
</body>
</html>
